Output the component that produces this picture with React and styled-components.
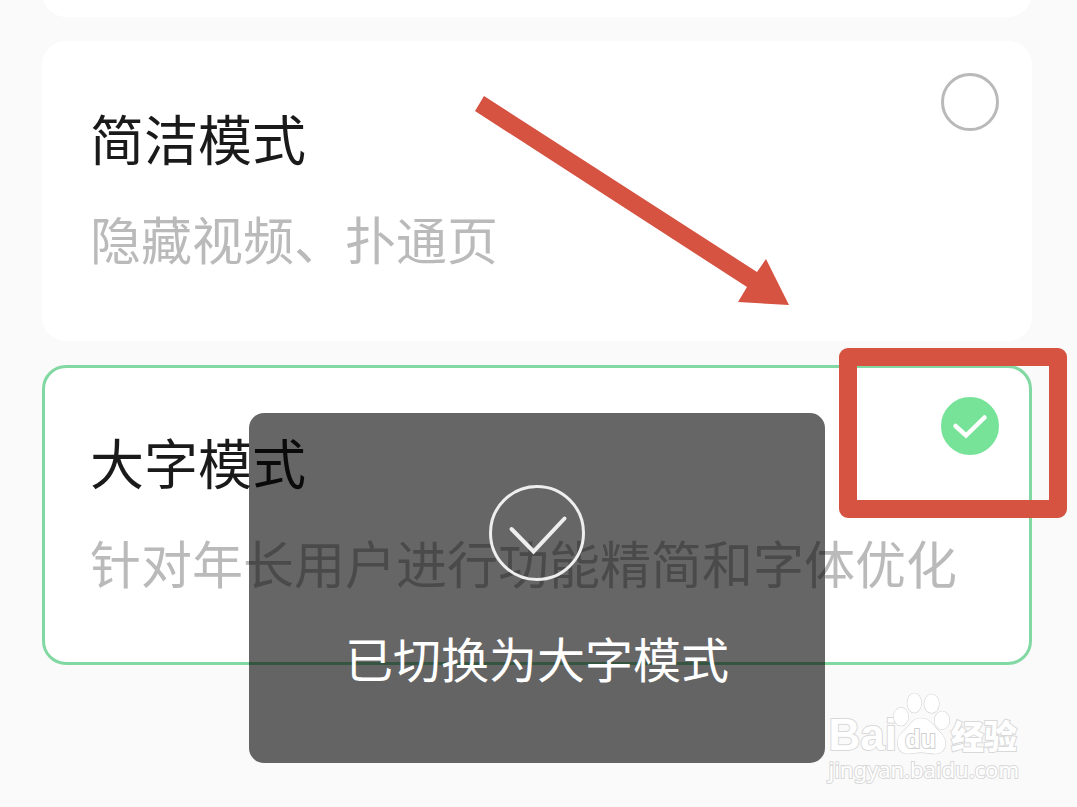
import React, { useState } from "react";
import styled, { createGlobalStyle } from "styled-components";

const GlobalStyle = createGlobalStyle`
  * {
    box-sizing: border-box;
  }
  body {
    margin: 0;
    background-color: #fafafa;
    font-family: "Noto Sans CJK SC", "Noto Sans", sans-serif;
  }
`;

const Page = styled.main`
  position: relative;
  min-height: 100vh;
  padding: 0 45px 0 42px;
  overflow: hidden;
`;

const ModeList = styled.form`
  position: relative;
  display: flex;
  flex-direction: column;
  gap: 24px;
`;

const PreviousCard = styled.div`
  height: 48px;
  margin-top: -31px;
  border-radius: 24px;
  background-color: white;
`;

const Card = styled.label`
  position: relative;
  display: flex;
  justify-content: space-between;
  align-items: flex-start;
  padding: 58px 30px 64px 45px;
  border: 3px solid ${(props) => (props.$selected ? "#82d8a2" : "white")};
  border-radius: 24px;
  background-color: white;
  cursor: pointer;
`;

const CardText = styled.div`
  display: flex;
  flex-direction: column;
  gap: 28px;
`;

const Title = styled.span`
  font-size: 54px;
  line-height: 72px;
  color: #1a1a1a;
`;

const Description = styled.span`
  font-size: 51px;
  line-height: 72px;
  color: #bababa;
  white-space: nowrap;
`;

const RadioWrap = styled.span`
  display: grid;
  flex: none;
  width: 58px;
  height: 58px;
  margin-top: -29px;
  margin-left: -58px;

  > * {
    grid-area: 1 / 1;
  }
`;

const Radio = styled.input`
  appearance: none;
  width: 58px;
  height: 58px;
  margin: 0;
  border: 3px solid #b9b9b9;
  border-radius: 50%;
  background-color: white;

  &:checked {
    border-color: #77e399;
    background-color: #77e399;
  }
`;

const Tick = styled.svg`
  width: 58px;
  height: 58px;
  pointer-events: none;
`;

const Frame = styled.span`
  position: absolute;
  top: -20px;
  right: -38px;
  width: 228px;
  height: 170px;
  border: 18px solid #d65241;
  border-radius: 9px;
  pointer-events: none;
`;

const Arrow = styled.svg`
  position: absolute;
  top: 90px;
  left: 470px;
  width: 325px;
  height: 220px;
  pointer-events: none;
`;

const Toast = styled.div`
  position: absolute;
  top: 413px;
  left: 50%;
  transform: translateX(-50%);
  display: flex;
  flex-direction: column;
  align-items: center;
  gap: 44px;
  width: 576px;
  padding: 72px 24px 74px;
  border-radius: 15px;
  background-color: rgba(0, 0, 0, 0.6);
`;

const ToastText = styled.p`
  margin: 0;
  font-size: 48px;
  line-height: 64px;
  color: white;
  white-space: nowrap;
`;

const Watermark = styled.div`
  position: absolute;
  right: 58px;
  bottom: 24px;
  color: white;
  -webkit-text-stroke: 2px #d9d9d9;
  paint-order: stroke fill;
`;

const Brand = styled.div`
  display: flex;
  align-items: flex-end;
  height: 66px;
`;

const Latin = styled.span`
  font-family: "Liberation Sans", sans-serif;
  font-size: 44px;
  font-weight: bold;
  line-height: 40px;
`;

const Chinese = styled.span`
  font-size: 33px;
  font-weight: 900;
  line-height: 40px;
`;

const Site = styled.div`
  font-family: "Noto Sans", sans-serif;
  font-size: 22px;
  line-height: 28px;
`;

const Paw = styled.svg`
  width: 60px;
  height: 64px;
  margin-left: -6px;
`;

const modes = [
  { id: "simple", title: "简洁模式", description: "隐藏视频、扑通页" },
  {
    id: "large",
    title: "大字模式",
    description: "针对年长用户进行功能精简和字体优化",
  },
];

export default () => {
  const [mode, setMode] = useState("large");

  return (
    <Page>
      <GlobalStyle />
      <ModeList>
        <PreviousCard />
        {modes.map(({ id, title, description }) => (
          <Card key={id} $selected={mode === id}>
            <CardText>
              <Title>{title}</Title>
              <Description>{description}</Description>
            </CardText>
            <RadioWrap>
              <Radio
                type="radio"
                name="mode"
                value={id}
                checked={mode === id}
                onChange={() => setMode(id)}
              />
              {mode === id && (
                <Tick viewBox="0 0 58 58" fill="none" aria-hidden="true">
                  <path
                    d="M14.5 29L25 38.5L43.5 20.5"
                    stroke="white"
                    strokeWidth="4.5"
                    strokeLinecap="round"
                  />
                </Tick>
              )}
            </RadioWrap>
            {id === "large" && <Frame />}
          </Card>
        ))}
        <Toast role="status">
          <svg width="96" height="96" viewBox="0 0 96 96" fill="none">
            <circle cx="48" cy="48" r="46.5" stroke="#eee" strokeWidth="3" />
            <path
              d="M22.5 44L44.5 66.5L75.5 33.5"
              stroke="#eee"
              strokeWidth="4"
              strokeLinecap="round"
            />
          </svg>
          <ToastText>已切换为大字模式</ToastText>
        </Toast>
      </ModeList>
      <Arrow viewBox="470 90 325 220" aria-hidden="true">
        <path
          d="M484 96L757 272L766 259L789 305L738 302L747 287L475 111Z"
          fill="#d65241"
        />
      </Arrow>
      <Watermark>
        <Brand>
          <Latin>Bai</Latin>
          <Paw viewBox="210 30 180 192">
            <g fill="white" stroke="#d9d9d9" strokeWidth="4">
              <ellipse cx="240" cy="107" rx="22" ry="27" />
              <ellipse cx="280" cy="66" rx="21" ry="29" />
              <ellipse cx="332" cy="68" rx="22" ry="28" />
              <ellipse cx="363" cy="118" rx="22" ry="27" />
              <path d="M300 112C275 112 268 132 252 147C236 161 230 171 230 187C231 208 244 218 262 218C278 218 286 214 300 214C315 214 326 218 342 218C361 218 373 206 373 186C372 169 363 159 350 147C334 131 326 112 300 112Z" />
            </g>
            <text
              x="252"
              y="200"
              fontFamily="Liberation Sans, sans-serif"
              fontSize="76"
              fontWeight="bold"
              fill="white"
              stroke="#d0d0d0"
              strokeWidth="6"
            >
              du
            </text>
          </Paw>
          <Chinese>经验</Chinese>
        </Brand>
        <Site>jingyan.baidu.com</Site>
      </Watermark>
    </Page>
  );
};
